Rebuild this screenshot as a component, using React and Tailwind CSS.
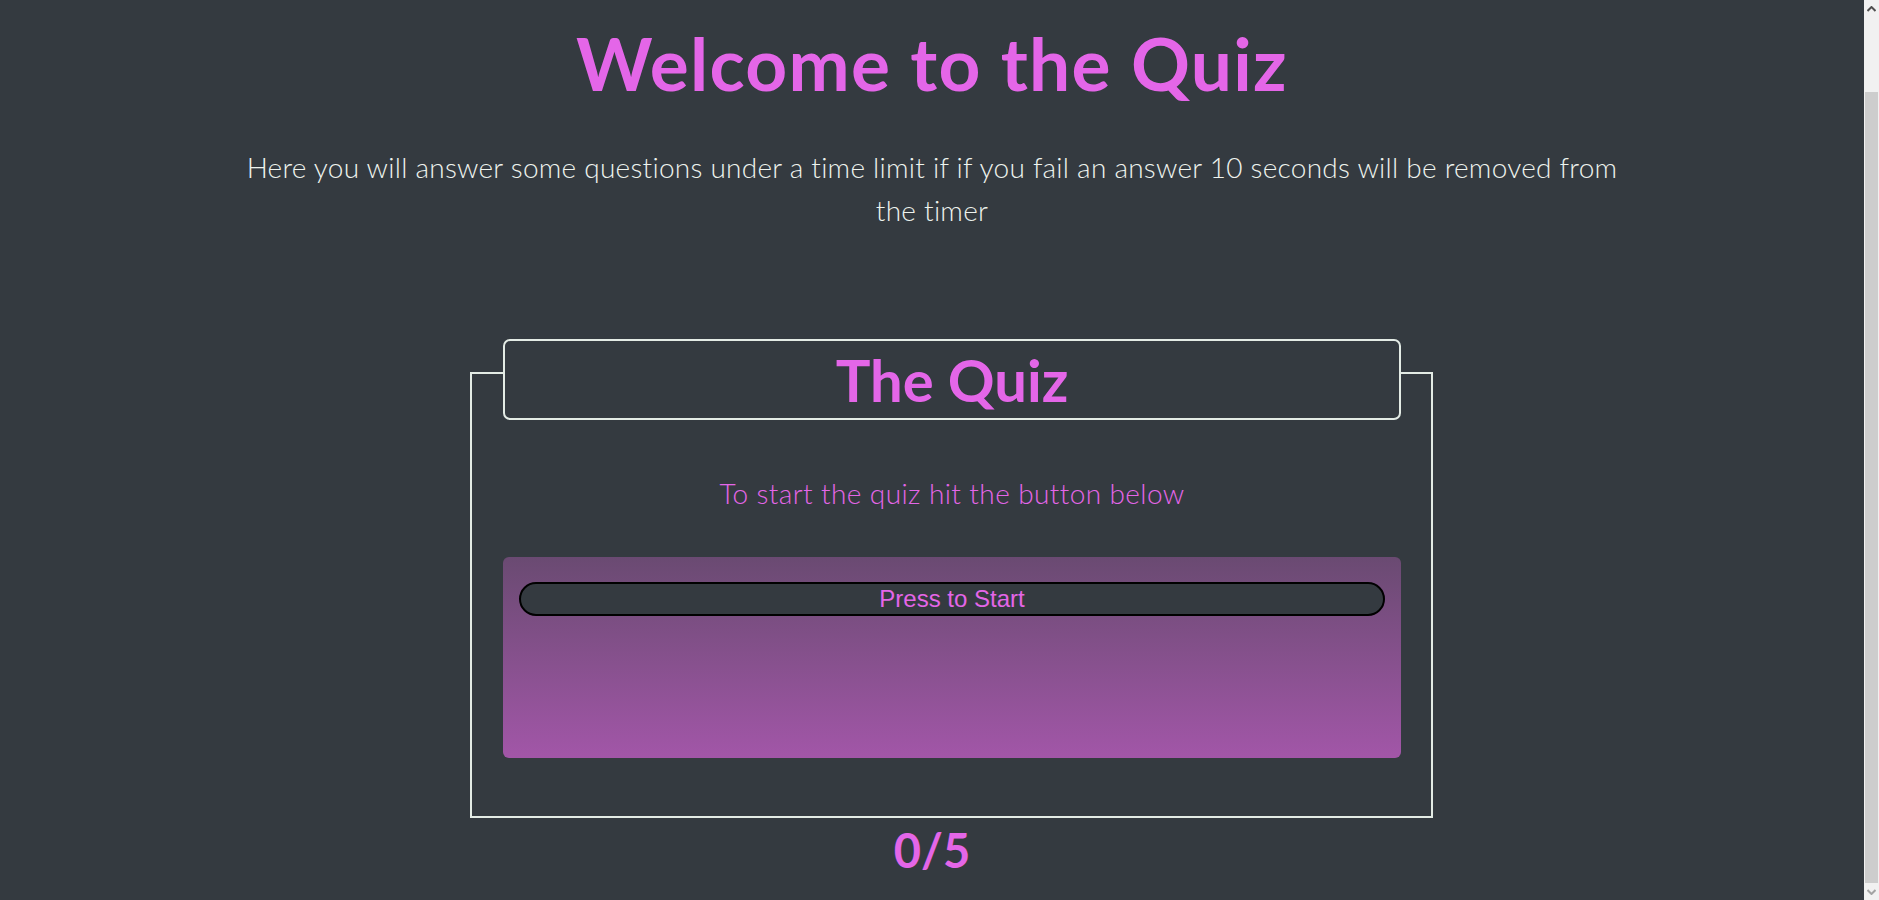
import React from 'react';

// the browser's classic scrollbar, already scrolled to the bottom in the reference
const FakeScrollbar = () => (
  <div className="fixed right-0 top-0 flex h-screen w-[15px] flex-col bg-[#f1f1f1]">
    <div className="flex h-[17px] items-center justify-center">
      <svg width="9" height="6" viewBox="0 0 9 6">
        <path d="M0.5 5 L4.5 1 L8.5 5" fill="none" stroke="#505050" strokeWidth="2" />
      </svg>
    </div>
    <div className="mt-[75px] mx-[1px] flex-1 bg-[#cdcdcd]" />
    <div className="flex h-[17px] items-center justify-center">
      <svg width="9" height="6" viewBox="0 0 9 6">
        <path d="M0.5 1 L4.5 5 L8.5 1" fill="none" stroke="#a3a3a3" strokeWidth="2" />
      </svg>
    </div>
  </div>
);

const App = () => {
  return (
    <div className="min-h-screen overflow-hidden bg-[#343a40] font-['Lato',sans-serif]">
      <div className="mr-[15px] pt-[20px]">
        <h1 className="text-center text-[73px] font-bold leading-[86px] tracking-[1.3px] text-[#e466e8]">
          Welcome to the Quiz
        </h1>
        <p className="mx-auto mt-[40px] w-[1400px] text-center text-[28px] font-light leading-[43px] tracking-[0.25px] text-[#eef3ee]">
          Here you will answer some questions under a time limit if if you fail an answer 10 seconds will be removed from the timer
        </p>

        <div className="mt-[140px] flex justify-center pl-[39px]">
          <div className="w-[963px] border-2 border-[#e3ebe5] pl-[31px] pr-[30px] pb-[58px]">
            <div className="-mt-[35px] flex h-[81px] items-center justify-center rounded-[7px] border-2 border-[#e3ebe5] bg-[#343a40]">
              <h2 className="text-[58px] font-bold leading-none text-[#e466e8]">The Quiz</h2>
            </div>
            <p className="mt-[52px] text-center text-[28px] font-light leading-[43px] tracking-[0.4px] text-[#e466e8]">
              To start the quiz hit the button below
            </p>
            <div className="mt-[42px] h-[201px] rounded-md bg-gradient-to-b from-[#6a4a72] to-[#a256a8] px-4 pt-[25px]">
              <button className="h-[34px] w-full rounded-full border-2 border-black bg-[#343a40] font-['Liberation_Sans',Arial,sans-serif] text-[24px] leading-none text-[#e466e8]">
                Press to Start
              </button>
            </div>
          </div>
        </div>

        <p className="mt-[4px] text-center text-[47px] font-bold leading-[56px] text-[#e466e8]">0/5</p>
      </div>
      <FakeScrollbar />
    </div>
  );
};

export default App;
